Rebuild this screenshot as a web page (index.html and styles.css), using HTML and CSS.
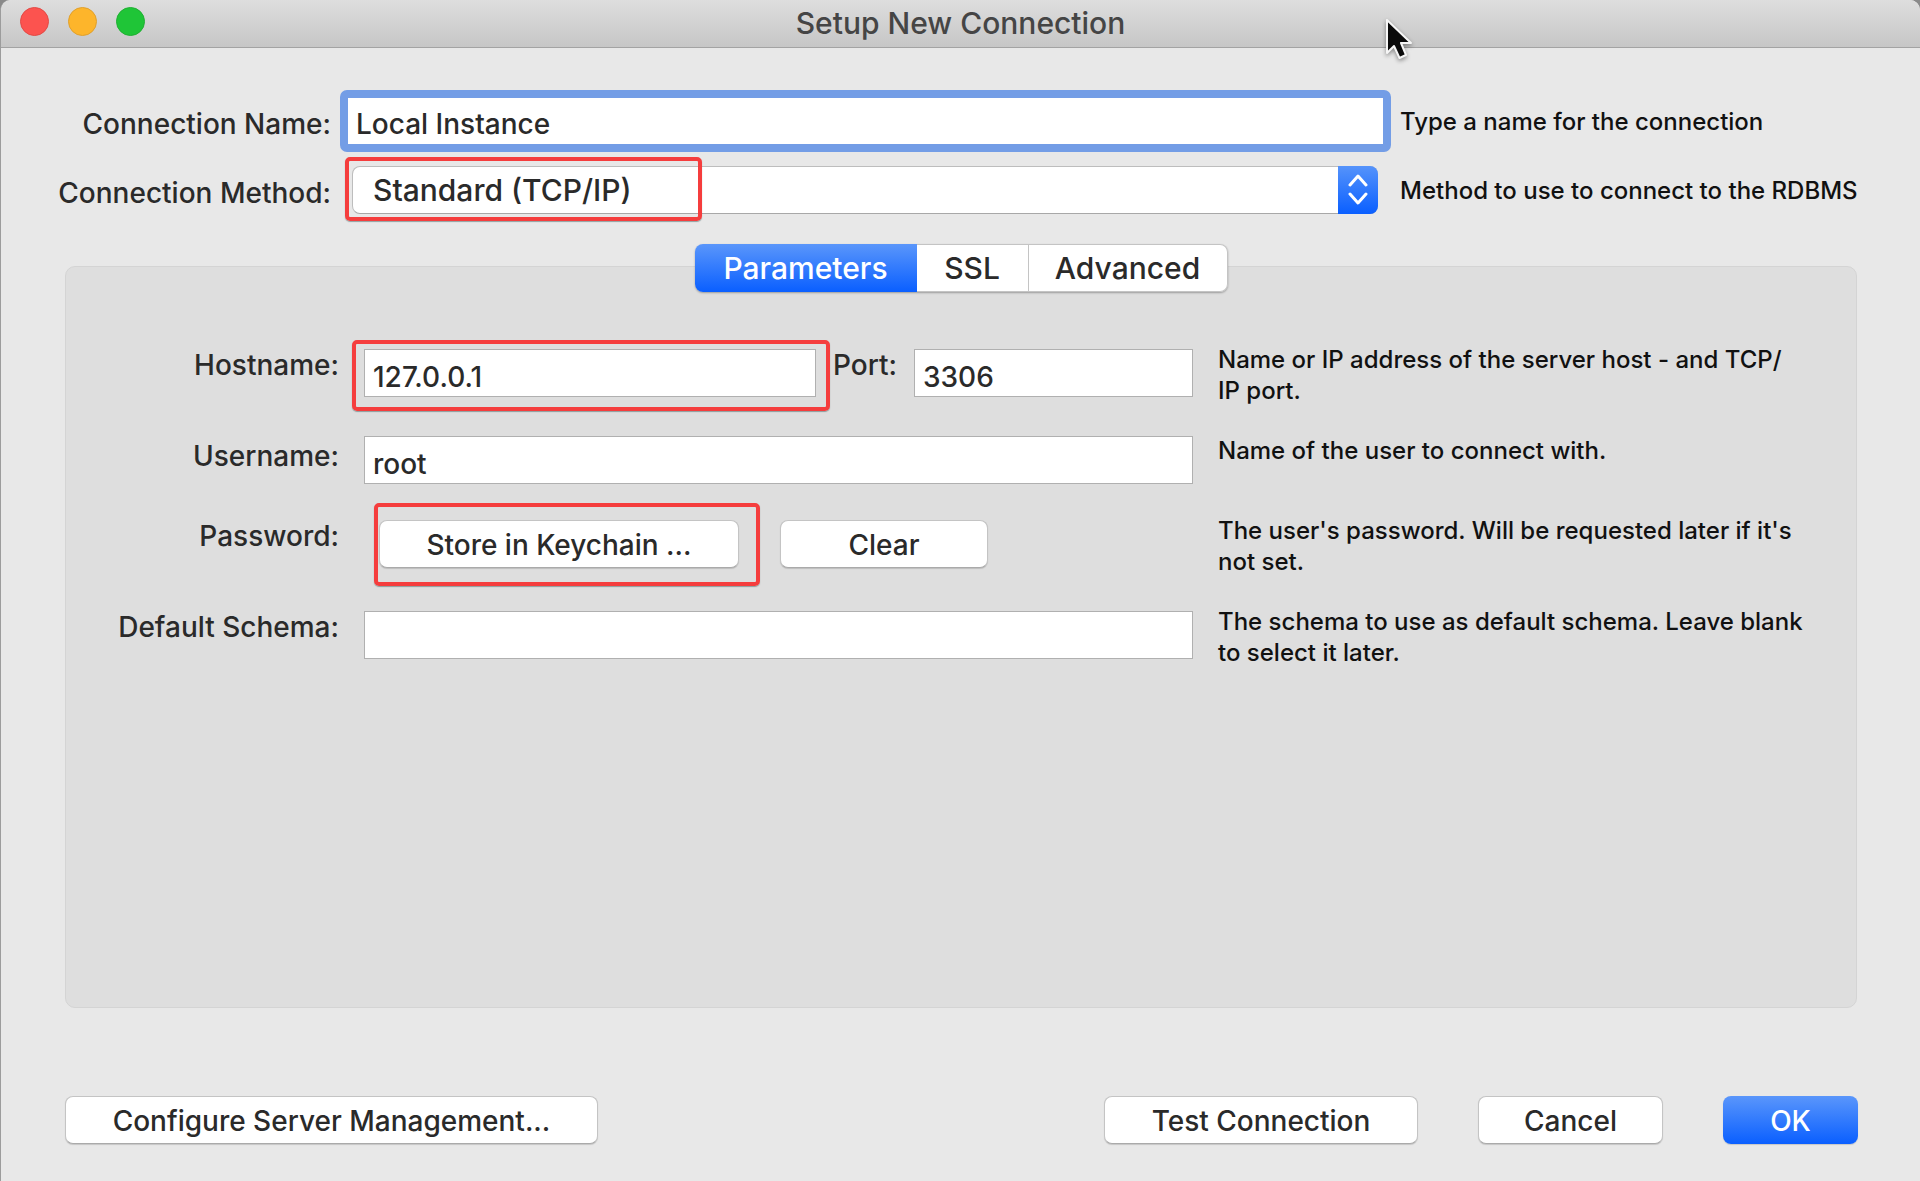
FILE: index.html
```html
<!DOCTYPE html>
<html lang="en">
<head>
<meta charset="utf-8">
<title>Setup New Connection</title>
<link rel="stylesheet" href="styles.css">
</head>
<body>
<main class="window">
  <header class="titlebar">
    <div class="lights">
      <button class="light light-close" type="button" aria-label="Close"></button>
      <button class="light light-minimize" type="button" aria-label="Minimize"></button>
      <button class="light light-zoom" type="button" aria-label="Zoom"></button>
    </div>
    <h1 class="title">Setup New Connection</h1>
    <svg class="pointer" width="32" height="46" viewBox="0 0 32 46" aria-hidden="true">
      <path d="M3 3V36L10 29L15.500 41L22 38L17 26H27Z" fill="#0a0a0a" stroke="#f6f6f6" stroke-width="2" stroke-linejoin="round"/>
    </svg>
  </header>

  <form class="content">
    <div class="general">
      <label class="label" for="name">Connection Name:</label>
      <input class="input input-focused" id="name" type="text" value="Local Instance">
      <p class="hint">Type a name for the connection</p>

      <label class="label" for="method">Connection Method:</label>
      <div class="select-wrap">
        <select class="select" id="method"><option>Standard (TCP/IP)</option></select>
        <span class="stepper" aria-hidden="true">
          <svg width="22" height="32" viewBox="0 0 22 32" fill="none" stroke="#fff" stroke-width="3" stroke-linecap="round" stroke-linejoin="round"><path d="M3 11L11 2L19 11M3 20L11 29L19 20"/></svg>
        </span>
        <span class="mark mark-method"></span>
      </div>
      <p class="hint">Method to use to connect to the RDBMS</p>
    </div>

    <section class="tabs">
      <div class="tablist" role="tablist">
        <button class="tab tab-active" type="button" role="tab" aria-selected="true">Parameters</button>
        <button class="tab tab-ssl" type="button" role="tab" aria-selected="false">SSL</button>
        <button class="tab tab-advanced" type="button" role="tab" aria-selected="false">Advanced</button>
      </div>
      <div class="panel" role="tabpanel">
        <div class="row">
          <label class="label" for="host">Hostname:</label>
          <div class="fields">
            <div class="host">
              <input class="input" id="host" type="text" value="127.0.0.1">
              <span class="mark mark-host"></span>
            </div>
            <label class="label label-port" for="port">Port:</label>
            <input class="input input-port" id="port" type="text" value="3306">
          </div>
          <p class="hint">Name or IP address of the server host - and TCP/<br>IP port.</p>
        </div>
        <div class="row row-short">
          <label class="label" for="user">Username:</label>
          <input class="input" id="user" type="text" value="root">
          <p class="hint">Name of the user to connect with.</p>
        </div>
        <div class="row">
          <span class="label">Password:</span>
          <div class="fields fields-buttons">
            <div class="keychain">
              <button class="button button-keychain" type="button">Store in Keychain ...</button>
              <span class="mark mark-keychain"></span>
            </div>
            <button class="button button-clear" type="button">Clear</button>
          </div>
          <p class="hint">The user's password. Will be requested later if it's not set.</p>
        </div>
        <div class="row">
          <label class="label" for="schema">Default Schema:</label>
          <input class="input" id="schema" type="text">
          <p class="hint">The schema to use as default schema. Leave blank to select it later.</p>
        </div>
      </div>
    </section>

    <footer class="actions">
      <button class="button button-configure" type="button">Configure Server Management...</button>
      <button class="button button-test" type="button">Test Connection</button>
      <button class="button button-cancel" type="button">Cancel</button>
      <button class="button button-ok" type="submit">OK</button>
    </footer>
  </form>
</main>
</body>
</html>
```

FILE: styles.css
```css
* { box-sizing: border-box; }

body {
  margin: 0;
  background: #8a8a8a;
  color: #2a2a2a;
  font-family: Inter, "Liberation Sans", sans-serif;
  font-size: 28px;
  font-weight: 450;
  line-height: 34px;
}

button, input, select { font: inherit; color: inherit; margin: 0; }

.window {
  display: flex;
  flex-direction: column;
  min-height: 100vh;
  border-left: 1px solid #9c9c9c;
  border-radius: 10px 10px 0 0;
  background: #e8e8e8;
}

.titlebar {
  position: relative;
  display: flex;
  align-items: center;
  justify-content: center;
  height: 48px;
  padding-bottom: 2px;
  border-bottom: 1px solid #a3a3a3;
  border-radius: 10px 10px 0 0;
  background: linear-gradient(#dedede, #c6c6c6);
}

.lights {
  position: absolute;
  left: 19px;
  top: 7px;
  display: flex;
  gap: 19px;
}

.light {
  width: 29px;
  height: 29px;
  padding: 0;
  border: 1px solid;
  border-radius: 50%;
}

.light-close { background: #fc534f; border-color: #e24a45; }
.light-minimize { background: #fdb52b; border-color: #e0a02c; }
.light-zoom { background: #1fc537; border-color: #1fb032; }

.title {
  margin: 0;
  color: #454545;
  font-size: 30px;
  font-weight: 450;
}

.pointer {
  position: absolute;
  left: 1383px;
  top: 17px;
  z-index: 2;
  filter: drop-shadow(0 2px 2px rgba(0, 0, 0, 0.4));
}

.content {
  flex: 1;
  display: flex;
  flex-direction: column;
  padding: 42px 0 37px;
}

.general {
  display: grid;
  grid-template-columns: 330px minmax(0, 1fr) 520px;
  column-gap: 9px;
  align-items: center;
}

.label {
  padding-top: 4px;
  text-align: right;
  white-space: nowrap;
}

.hint {
  margin: 0;
  color: #111;
  font-size: 24px;
  line-height: 31px;
}

.input {
  display: block;
  width: 100%;
  height: 48px;
  padding: 7px 8px 0;
  border: 1px solid #b0b0b0;
  border-radius: 0;
  outline: 0;
  background: #fff;
}

.input-focused {
  height: 62px;
  padding-top: 6px;
  border: 8px solid #739de6;
  border-radius: 7px;
}

.select-wrap {
  position: relative;
  display: flex;
  margin: 14px 13px 14px 12px;
}

.select {
  appearance: none;
  flex: 1;
  height: 48px;
  padding: 0 60px 0 20px;
  border: 1px solid #bdbdbd;
  border-bottom-color: #a8a8a8;
  border-radius: 8px;
  background: #fff;
  font-size: 30px;
}

.stepper {
  position: absolute;
  top: 0;
  right: 0;
  bottom: 0;
  display: flex;
  align-items: center;
  justify-content: center;
  width: 40px;
  border-radius: 0 8px 8px 0;
  background: linear-gradient(#5593fb, #0a5fff);
  pointer-events: none;
}

/* Red callout frames over the fields to fill in */
.mark {
  position: absolute;
  border: 4px solid #f53d3d;
  border-radius: 5px;
  box-shadow: 0 1px 1px rgba(60, 90, 90, 0.5);
  pointer-events: none;
}

.mark-method { left: -7px; top: -9px; width: 357px; height: 64px; }
.mark-host { inset: -9px -14px -14px -12px; }
.mark-keychain { inset: -17px -21px -18px -5px; }

.general .label { padding-top: 6px; }
.general .hint { padding-top: 1px; }

.tabs {
  flex: 1;
  display: flex;
  flex-direction: column;
  margin: 16px 63px 0 64px;
}

.tablist {
  z-index: 1;
  display: flex;
  align-self: center;
  height: 48px;
  margin-bottom: -26px;
  border-radius: 8px;
  box-shadow: 0 1px 2px rgba(0, 0, 0, 0.3);
}

.tab {
  padding: 0;
  border: 1px solid #c4c4c4;
  border-left-width: 0;
  background: #fff;
  font-size: 30px;
}

.tab-active {
  width: 222px;
  border: 0;
  border-radius: 8px 0 0 8px;
  background: linear-gradient(#5a96fb, #0a5fff);
  color: #fff;
}

.tab-ssl { width: 112px; }
.tab-advanced { width: 199px; border-radius: 0 8px 8px 0; }

.panel {
  flex: 1;
  display: flex;
  flex-direction: column;
  gap: 12px;
  padding: 77px 38px 24px 0;
  border: 1px solid #d4d4d4;
  border-radius: 10px;
  background: #dedede;
}

.row {
  display: grid;
  grid-template-columns: 273px minmax(0, 1fr) 600px;
  column-gap: 25px;
  align-items: start;
  min-height: 79px;
}

.row-short { min-height: 68px; }
.row > .input, .fields { margin-top: 5px; }
.row-short > .input { margin-top: 1px; }

.fields { display: flex; }
.host { position: relative; flex: 1; }
.label-port { margin: -5px 17px 0; }
.input-port { width: 279px; }
.fields-buttons { gap: 41px; padding-left: 15px; }
.keychain { position: relative; display: flex; }

.button {
  height: 48px;
  padding: 1px 16px 0;
  border: 1px solid #c4c4c4;
  border-bottom-color: #aaa;
  border-radius: 8px;
  background: #fff;
  box-shadow: 0 1px 1px rgba(0, 0, 0, 0.15);
  white-space: nowrap;
}

.button-keychain { width: 360px; }
.button-clear { width: 208px; }

.actions {
  display: flex;
  gap: 60px;
  margin: 88px 62px 0 64px;
}

.button-configure { width: 533px; margin-right: auto; }
.button-test { width: 314px; }
.button-cancel { width: 185px; }

.button-ok {
  width: 135px;
  border: 0;
  background: linear-gradient(#5a96fb, #0a5fff);
  color: #fff;
}
```
